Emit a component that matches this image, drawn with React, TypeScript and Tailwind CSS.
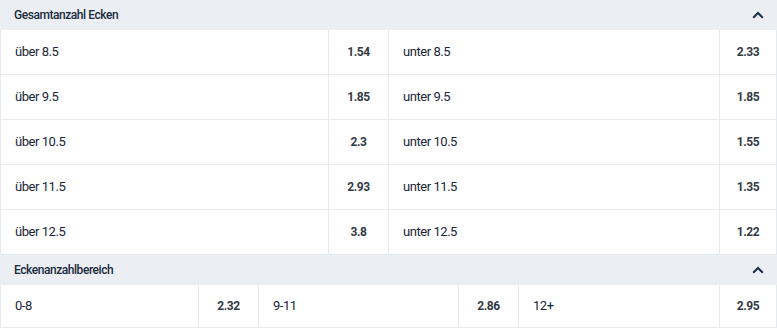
const totalCorners = [
  { over: "über 8.5", overOdd: "1.54", under: "unter 8.5", underOdd: "2.33" },
  { over: "über 9.5", overOdd: "1.85", under: "unter 9.5", underOdd: "1.85" },
  { over: "über 10.5", overOdd: "2.3", under: "unter 10.5", underOdd: "1.55" },
  { over: "über 11.5", overOdd: "2.93", under: "unter 11.5", underOdd: "1.35" },
  { over: "über 12.5", overOdd: "3.8", under: "unter 12.5", underOdd: "1.22" },
];

const ranges = [
  { label: "0-8", odd: "2.32" },
  { label: "9-11", odd: "2.86" },
  { label: "12+", odd: "2.95" },
];

function Chevron() {
  return (
    <svg width="12" height="8" viewBox="0 0 12 8" fill="none" className="text-[#1c2f4a]">
      <path d="M1.2 6.8 L6 2 L10.8 6.8" stroke="currentColor" strokeWidth="2" />
    </svg>
  );
}

function SectionHeader({ title }: { title: string }) {
  return (
    <div className="flex h-[30px] items-center justify-between bg-[#ebeef2] pl-[14px] pr-[13px]">
      <span className="text-[12px] font-medium tracking-[-0.45px] text-[#1b2b40]">{title}</span>
      <Chevron />
    </div>
  );
}

function Label({ text, height = "h-[44px]" }: { text: string; height?: string }) {
  return (
    <div className={`flex ${height} items-center bg-white pl-[14px] text-[13px] tracking-[-0.45px] text-[#1a2638]`}>
      {text}
    </div>
  );
}

function Odd({ value, height = "h-[44px]" }: { value: string; height?: string }) {
  return (
    <div className={`flex ${height} items-center justify-center bg-white text-[12px] font-bold tracking-[-0.4px] text-[#333a45]`}>
      {value}
    </div>
  );
}

export default function App() {
  return (
    <div
      className="w-[777px] overflow-hidden bg-[#e6e9ee]"
      style={{ fontFamily: "Roboto, 'Liberation Sans', sans-serif" }}
    >
      <SectionHeader title="Gesamtanzahl Ecken" />
      <div className="grid grid-cols-[327px_59px_330px_56px] gap-px px-px pb-px">
        {totalCorners.map((row) => (
          <>
            <Label key={row.over} text={row.over} />
            <Odd value={row.overOdd} />
            <Label text={row.under} />
            <Odd value={row.underOdd} />
          </>
        ))}
      </div>
      <SectionHeader title="Eckenanzahlbereich" />
      <div className="grid grid-cols-[197px_59px_199px_59px_200px_56px] gap-px px-px pb-px">
        {ranges.map((r) => (
          <>
            <Label key={r.label} text={r.label} height="h-[42px]" />
            <Odd value={r.odd} height="h-[42px]" />
          </>
        ))}
      </div>
    </div>
  );
}
